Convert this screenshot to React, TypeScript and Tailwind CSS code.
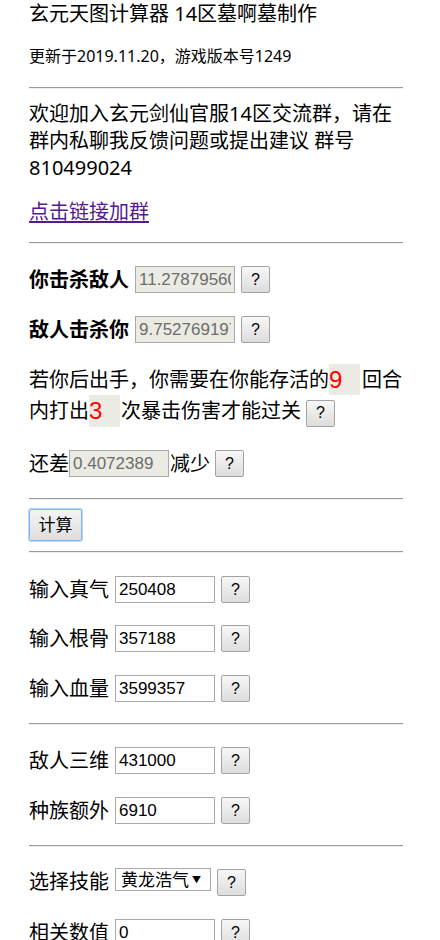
import React from "react";

const cjk = "font-['Noto_Sans','Noto_Sans_CJK_SC',sans-serif]";
const arial = "font-['Liberation_Sans','Noto_Sans_CJK_SC',sans-serif]";

const Rule = ({ className = "" }: { className?: string }) => (
    <div className={`w-[374px] border-t border-t-[#9a9a9a] border-b border-b-[#eeeeee] ${className}`} />
);

const Help = ({ className = "" }: { className?: string }) => (
    <button className={`w-[29px] h-[27px] shrink-0 border border-[#a3a3a3] rounded-[2px] bg-gradient-to-b from-[#f7f7f7] to-[#dddddd] text-[16px] text-black leading-none ${arial} ${className}`}>?</button>
);

const Field = ({ value, disabled = false, className = "" }: { value: string; disabled?: boolean; className?: string }) => (
    <input
        readOnly
        value={value}
        className={`w-[100px] h-[27px] shrink-0 border border-[#a9a9a9] px-[3px] text-[17px] outline-none ${arial} ${disabled ? "bg-[#ebebe4] text-[#6d6d6d]" : "bg-white text-black"} ${className}`}
    />
);

const Row = ({ label, value, className = "", bold = false, disabled = false }: any) => (
    <div className={`flex items-center h-[27px] ${className}`}>
        <span className={`text-[20px] leading-[27px] ${bold ? "font-bold" : ""}`}>{label}</span>
        <Field value={value} disabled={disabled} className="ml-[6px]" />
        <Help className="ml-[6px]" />
    </div>
);

const App = () => {
    return (
        <div className={`min-h-[940px] bg-white text-black pl-[29px] pr-[37px] ${cjk}`}>
            <div className="text-[20px] leading-[28px] h-[28px]">玄元天图计算器 14区墓啊墓制作</div>
            <div className="mt-[17px] text-[16px] leading-[22px]">更新于2019.11.20，游戏版本号1249</div>

            <Rule className="mt-[20px]" />

            <p className="mt-[11px] text-[20px] leading-[27px]">
                欢迎加入玄元剑仙官服14区交流群，请在<br />
                群内私聊我反馈问题或提出建议 群号<br />
                810499024
            </p>
            <div className="mt-[17px] text-[20px] leading-[27px]">
                <a href="#" className="text-[#551a8b] underline underline-offset-[2px]">点击链接加群</a>
            </div>

            <Rule className="mt-[17px]" />

            <div className="flex items-center h-[27px] mt-[22px]">
                <span className="text-[20px] leading-[27px] font-bold">你击杀敌人</span>
                <Field value="11.27879560" disabled className="ml-[6px]" />
                <Help className="ml-[6px] w-[28px]" />
            </div>
            <div className="flex items-center h-[27px] mt-[23px]">
                <span className="text-[20px] leading-[27px] font-bold">敌人击杀你</span>
                <Field value="9.752769197" disabled className="ml-[6px]" />
                <Help className="ml-[6px] w-[28px]" />
            </div>

            <div className="mt-[21px] text-[20px]">
                <div className="flex items-center h-[31px]">
                    <span>若你后出手，你需要在你能存活的</span>
                    <input readOnly value="9" className={`w-[31px] h-[31px] bg-[#ebebe4] text-[#ff0000] text-[24px] outline-none ${arial}`} />
                    <span className="ml-[2px]">回合</span>
                </div>
                <div className="flex items-center h-[32px]">
                    <span>内打出</span>
                    <input readOnly value="3" className={`w-[31px] h-[32px] bg-[#ebebe4] text-[#ff0000] text-[24px] outline-none ${arial}`} />
                    <span className="ml-[1px]">次暴击伤害才能过关</span>
                    <Help className="ml-[5px] w-[28px] h-[26px] mt-[4px]" />
                </div>
            </div>

            <div className="flex items-center h-[27px] mt-[23px]">
                <span className="text-[20px] leading-[27px]">还差</span>
                <Field value="0.4072389" disabled />
                <span className="text-[20px] leading-[27px] ml-[1px]">减少</span>
                <Help className="ml-[5px] w-[28px]" />
            </div>

            <Rule className="mt-[21px]" />

            <button className="mt-[9px] w-[53px] h-[32px] border border-[#7eb4ea] rounded-[2px] bg-gradient-to-b from-[#f4f4f4] to-[#dedede] text-[17px] text-black shadow-[0_0_0_1px_#bcd8f6]">计算</button>

            <Rule className="mt-[10px]" />

            <Row label="输入真气" value="250408" className="mt-[23px]" />
            <Row label="输入根骨" value="357188" className="mt-[22px]" />
            <Row label="输入血量" value="3599357" className="mt-[23px]" />

            <Rule className="mt-[21px]" />

            <Row label="敌人三维" value="431000" className="mt-[22px]" />
            <Row label="种族额外" value="6910" className="mt-[23px]" />

            <Rule className="mt-[21px]" />

            <div className="flex items-start h-[28px] mt-[21px]">
                <span className="text-[20px] leading-[28px]">选择技能</span>
                <div className="ml-[6px] w-[96px] h-[23px] border border-[#a9a9a9] bg-white flex items-center pl-[5px] overflow-hidden">
                    <span className="text-[17px] leading-none whitespace-nowrap">黄龙浩气</span>
                    <span className="ml-[3px] text-[9px] leading-none">▼</span>
                </div>
                <Help className="ml-[6px] mt-[1px]" />
            </div>

            <Row label="相关数值" value="0" className="mt-[23px]" />
        </div>
    );
};

export default App;
